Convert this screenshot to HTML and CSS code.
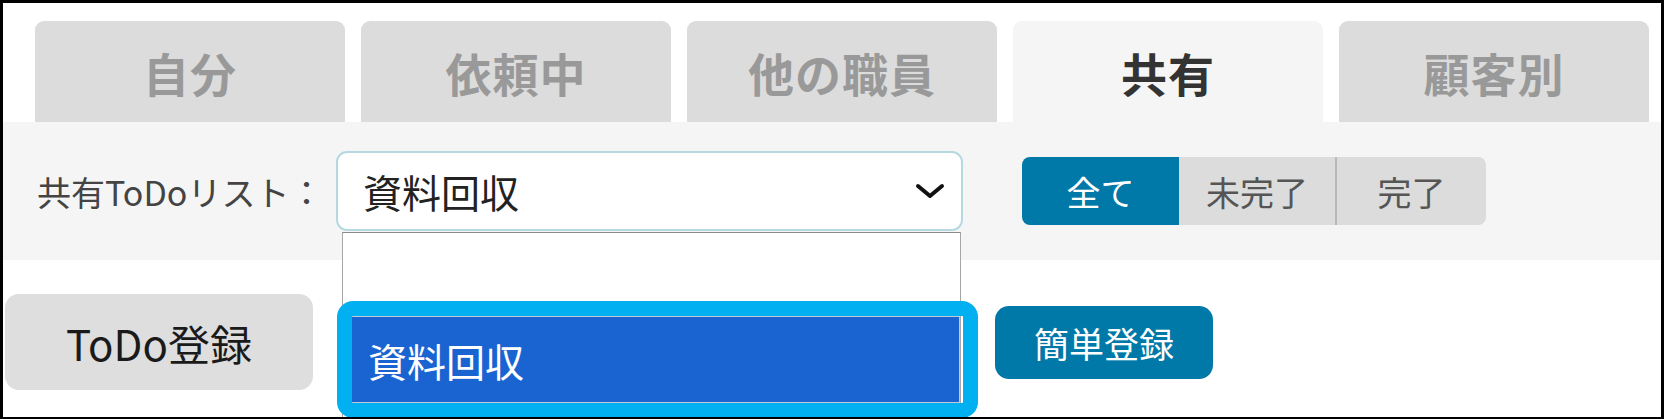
FILE: index.html
```html
<!DOCTYPE html>
<html lang="ja">
<head>
<meta charset="utf-8">
<title>共有ToDo</title>
<link rel="stylesheet" href="styles.css">
</head>
<body>
<div class="frame">
  <div class="tabs">
    <div class="tab">自分</div>
    <div class="tab">依頼中</div>
    <div class="tab">他の職員</div>
    <div class="tab tab-active">共有</div>
    <div class="tab">顧客別</div>
  </div>
  <div class="panel">
    <div class="label">共有ToDoリスト：</div>
    <div class="select-wrap">
      <div class="select">
        <span class="select-text">資料回収</span>
        <svg class="chevron" width="30" height="16" viewBox="0 0 30 16"><path d="M3 3 L15 13 L27 3" fill="none" stroke="#111" stroke-width="4" stroke-linecap="round" stroke-linejoin="round"/></svg>
      </div>
      <div class="dropdown">
        <div class="opt opt-empty"></div>
        <div class="opt opt-selected">資料回収</div>
        <div class="annot"></div>
      </div>
    </div>
    <div class="seg">
      <div class="seg-btn seg-active">全て</div>
      <div class="seg-btn seg-mid">未完了</div>
      <div class="seg-btn seg-last">完了</div>
    </div>
  </div>
  <div class="actions">
    <div class="btn btn-gray">ToDo登録</div>
    <div class="btn btn-blue">簡単登録</div>
  </div>
</div>
</body>
</html>
```
FILE: styles.css
```css
* { box-sizing: border-box; }
html, body { margin: 0; padding: 0; background: #fff; }
body { font-family: "Noto Sans CJK JP", "Noto Sans", sans-serif; }

.frame {
  width: 1664px;
  height: 419px;
  border: 3px solid #000;
  border-bottom-width: 2px;
  overflow: hidden;
  background: #fff;
}

.tabs {
  display: flex;
  gap: 16px;
  padding: 18px 0 0 32px;
}
.tab {
  width: 310px;
  height: 101px;
  background: #dcdcdc;
  border-radius: 9px 9px 0 0;
  display: flex;
  align-items: center;
  justify-content: center;
  font-size: 46px;
  font-weight: 700;
  color: #999;
  letter-spacing: 1px;
}
.tab-active { background: #f5f5f5; color: #333; }

.panel {
  height: 138px;
  background: #f5f5f5;
  display: flex;
  align-items: center;
  padding-left: 34px;
}
.label {
  width: 299px;
  white-space: nowrap;
  font-size: 34px;
  color: #444;
  letter-spacing: 0;
}
.select-wrap { position: relative; }
.select {
  width: 627px;
  height: 80px;
  background: #fff;
  border: 2px solid #b5d9e1;
  border-radius: 11px;
  display: flex;
  align-items: center;
  justify-content: space-between;
  padding: 0 16px 0 25px;
}
.select-text { font-size: 39px; color: #222; }
.chevron { display: block; }

.dropdown {
  position: absolute;
  left: 6px;
  right: 2px;
  top: calc(100% + 1px);
  height: 200px;
  background: #fff;
  border: 1px solid #a6a6a6;
  border-top-color: #8a8a8a;
  z-index: 5;
}
.opt { height: 83px; }
.opt-selected {
  height: 87px;
  background: #1a64d2;
  border: 1px solid #c3c9d6;
  color: #fff;
  font-size: 39px;
  display: flex;
  align-items: center;
  padding-left: 24px;
}
.annot {
  position: absolute;
  left: -6px;
  top: 68px;
  width: 641px;
  height: 117px;
  border: 15px solid #00b0f0;
  border-radius: 16px;
}

.seg {
  margin-left: 59px;
  display: flex;
  height: 68px;
  border-radius: 8px;
  overflow: hidden;
}
.seg-btn {
  background: #dcdcdc;
  color: #555;
  font-size: 34px;
  display: flex;
  align-items: center;
  justify-content: center;
}
.seg-active { width: 157px; background: #0079a8; color: #fff; }
.seg-mid { width: 156px; }
.seg-last { width: 151px; border-left: 2px solid #b8b8b8; }

.actions {
  display: flex;
  align-items: center;
  margin-top: 34px;
  padding-left: 2px;
}
.btn {
  display: flex;
  align-items: center;
  justify-content: center;
  border-radius: 14px;
}
.btn-gray {
  width: 308px;
  height: 96px;
  background: #dedede;
  color: #1a1a1a;
  font-size: 42px;
  font-weight: 400;
}
.btn-blue {
  margin-left: 682px;
  width: 218px;
  height: 73px;
  background: #0079a8;
  color: #fff;
  font-size: 35px;
}
```
